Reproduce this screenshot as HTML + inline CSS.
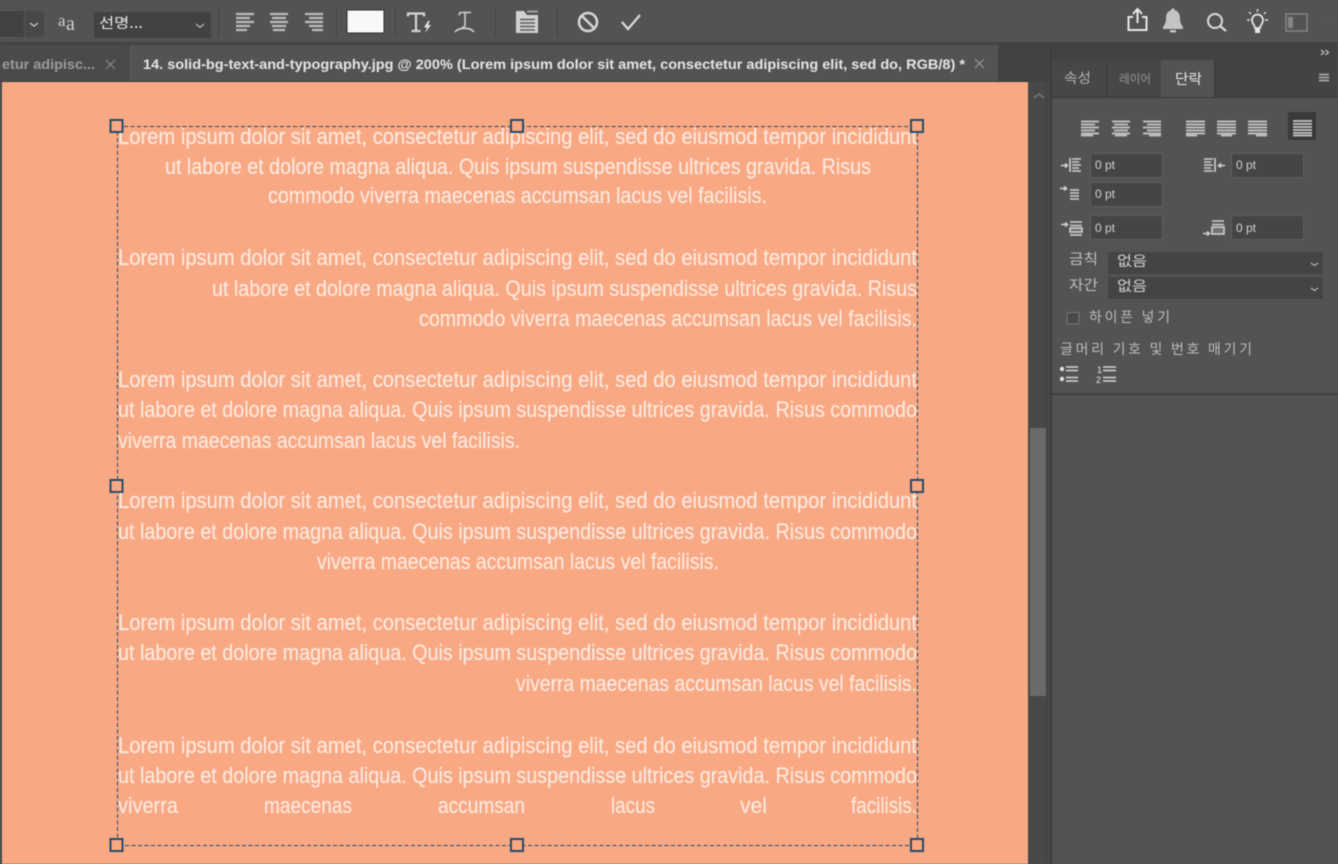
<!DOCTYPE html>
<html><head><meta charset="utf-8"><style>
html,body{margin:0;padding:0;background:#535353;width:1338px;height:864px;overflow:hidden}
svg{display:block;filter:blur(.4px)}
text{font-family:"Liberation Sans","Noto Sans CJK KR",sans-serif}
.b text{font-size:22px;fill:#fde9df;stroke:#fde9df;stroke-width:.15px}
.k{font-family:"WenQuanYi Zen Hei","Noto Sans CJK KR",sans-serif!important}
.pt{font-size:12px;fill:#d2d2d2}
</style></head><body>
<svg width="1338" height="864" viewBox="0 0 1338 864" xmlns="http://www.w3.org/2000/svg">
<rect width="1338" height="864" fill="#535353"/>
<!-- top bar -->
<rect x="0" y="42" width="1338" height="3" fill="#434343"/>
<!-- tab strip -->
<rect x="0" y="45" width="1050" height="37" fill="#424242"/>
<rect x="0" y="45" width="128" height="36" fill="#4a4a4a"/>
<rect x="129" y="45" width="869" height="36" fill="#535353"/>
<rect x="0" y="81" width="1028" height="1.5" fill="#3a3a3a"/>
<text x="2" y="69" font-size="14" font-weight="bold" fill="#9c9c9c" textLength="93" lengthAdjust="spacingAndGlyphs">etur adipisc...</text>
<path d="M106 60l9 9M115 60l-9 9" stroke="#8f8f8f" stroke-width="1.100"/>
<text x="143" y="69" font-size="14" font-weight="bold" fill="#e6e6e6" textLength="822" lengthAdjust="spacingAndGlyphs">14. solid-bg-text-and-typography.jpg @ 200% (Lorem ipsum dolor sit amet, consectetur adipiscing elit, sed do, RGB/8) *</text>
<path d="M975 59l9 9M984 59l-9 9" stroke="#9a9a9a" stroke-width="1.100"/>

<!-- canvas -->
<rect x="2" y="82" width="1026" height="782" fill="#f8a883"/>
<rect x="0" y="82" width="2" height="782" fill="#4a4a4a"/>

<!-- scrollbar -->
<rect x="1028" y="82" width="22" height="782" fill="#484848"/>
<rect x="1030" y="428" width="16" height="268" fill="#6a6a6a"/>
<path d="M1034 98l5-4 5 4" fill="none" stroke="#777" stroke-width="1.500"/>
<rect x="1046" y="82" width="1" height="782" fill="#404040"/>
<rect x="1050" y="45" width="2" height="819" fill="#3d3d3d"/>

<!-- body text -->
<g class="b" transform="translate(0,-1)">
<text x="118" y="145" textLength="799" lengthAdjust="spacingAndGlyphs">Lorem ipsum dolor sit amet, consectetur adipiscing elit, sed do eiusmod tempor incididunt</text>
<text x="165" y="175" textLength="706" lengthAdjust="spacingAndGlyphs">ut labore et dolore magna aliqua. Quis ipsum suspendisse ultrices gravida. Risus</text>
<text x="268" y="204" textLength="499" lengthAdjust="spacingAndGlyphs">commodo viverra maecenas accumsan lacus vel facilisis.</text>

<text x="118" y="266" textLength="799" lengthAdjust="spacingAndGlyphs">Lorem ipsum dolor sit amet, consectetur adipiscing elit, sed do eiusmod tempor incididunt</text>
<text x="212" y="297" textLength="705" lengthAdjust="spacingAndGlyphs">ut labore et dolore magna aliqua. Quis ipsum suspendisse ultrices gravida. Risus</text>
<text x="419" y="327" textLength="498" lengthAdjust="spacingAndGlyphs">commodo viverra maecenas accumsan lacus vel facilisis.</text>

<text x="118" y="388" textLength="799" lengthAdjust="spacingAndGlyphs">Lorem ipsum dolor sit amet, consectetur adipiscing elit, sed do eiusmod tempor incididunt</text>
<text x="118" y="418" textLength="799" lengthAdjust="spacingAndGlyphs">ut labore et dolore magna aliqua. Quis ipsum suspendisse ultrices gravida. Risus commodo</text>
<text x="118" y="449" textLength="402" lengthAdjust="spacingAndGlyphs">viverra maecenas accumsan lacus vel facilisis.</text>

<text x="118" y="509" textLength="799" lengthAdjust="spacingAndGlyphs">Lorem ipsum dolor sit amet, consectetur adipiscing elit, sed do eiusmod tempor incididunt</text>
<text x="118" y="540" textLength="799" lengthAdjust="spacingAndGlyphs">ut labore et dolore magna aliqua. Quis ipsum suspendisse ultrices gravida. Risus commodo</text>
<text x="317" y="570" textLength="402" lengthAdjust="spacingAndGlyphs">viverra maecenas accumsan lacus vel facilisis.</text>

<text x="118" y="631" textLength="799" lengthAdjust="spacingAndGlyphs">Lorem ipsum dolor sit amet, consectetur adipiscing elit, sed do eiusmod tempor incididunt</text>
<text x="118" y="661" textLength="799" lengthAdjust="spacingAndGlyphs">ut labore et dolore magna aliqua. Quis ipsum suspendisse ultrices gravida. Risus commodo</text>
<text x="516" y="692" textLength="401" lengthAdjust="spacingAndGlyphs">viverra maecenas accumsan lacus vel facilisis.</text>

<text x="118" y="754" textLength="799" lengthAdjust="spacingAndGlyphs">Lorem ipsum dolor sit amet, consectetur adipiscing elit, sed do eiusmod tempor incididunt</text>
<text x="118" y="784" textLength="799" lengthAdjust="spacingAndGlyphs">ut labore et dolore magna aliqua. Quis ipsum suspendisse ultrices gravida. Risus commodo</text>
<text x="118" y="814" textLength="60" lengthAdjust="spacingAndGlyphs">viverra</text>
<text x="264" y="814" textLength="88" lengthAdjust="spacingAndGlyphs">maecenas</text>
<text x="438" y="814" textLength="87" lengthAdjust="spacingAndGlyphs">accumsan</text>
<text x="611" y="814" textLength="44" lengthAdjust="spacingAndGlyphs">lacus</text>
<text x="740" y="814" textLength="27" lengthAdjust="spacingAndGlyphs">vel</text>
<text x="851" y="814" textLength="66" lengthAdjust="spacingAndGlyphs">facilisis.</text>
</g>

<!-- text box -->
<rect x="117.500" y="126.500" width="800" height="719" fill="none" stroke="#1f4a68" stroke-width="1" stroke-dasharray="4 2.500"/>
<g fill="#f8a883" stroke="#1f4e6e" stroke-width="2">
<rect x="110.500" y="120" width="12" height="12"/><rect x="511" y="120" width="12" height="12"/><rect x="911" y="120" width="12" height="12"/>
<rect x="110.500" y="480" width="12" height="12"/><rect x="911" y="480" width="12" height="12"/>
<rect x="110.500" y="839" width="12" height="12"/><rect x="511" y="839" width="12" height="12"/><rect x="911" y="839" width="12" height="12"/>
</g>

<!-- toolbar left -->
<rect x="0" y="11" width="24" height="26" fill="#424242"/>
<rect x="25" y="11" width="19" height="26" fill="#484848"/>
<path d="M30 23l4 3 4-3" fill="none" stroke="#c8c8c8" stroke-width="1.300"/>
<text x="58" y="26" font-size="17" fill="#d0d0d0" style="font-family:'Liberation Serif',serif">a</text>
<text x="66" y="30" font-size="20" fill="#d0d0d0" style="font-family:'Liberation Serif',serif">a</text>
<rect x="94" y="12" width="117" height="26" fill="#424242"/>
<text class="k" x="99" y="28" font-size="14" fill="#e8e8e8" textLength="44" lengthAdjust="spacingAndGlyphs">선명...</text>
<path d="M196 24l4 3.500 4-3.500" fill="none" stroke="#b8b8b8" stroke-width="1.200"/>
<rect x="218" y="7" width="1" height="30" fill="#444"/>
<!-- align -->
<g fill="none" stroke="#bdbdbd" stroke-width="2.200">
<path d="M236 14h18M236 18h14M236 22h18M236 26h14M236 30h11"/>
<path d="M270 14h18M272 18h14M270 22h18M272 26h14M273 30h12"/>
<path d="M305 14h18M309 18h14M305 22h18M309 26h14M312 30h11"/>
</g>
<rect x="336" y="7" width="1" height="30" fill="#444"/>
<rect x="347" y="10" width="37" height="23" rx="1" fill="#f8f8f8" stroke="#2e2e2e" stroke-width="1"/>
<rect x="395" y="7" width="1" height="30" fill="#444"/>
<!-- warp icons -->
<path d="M408 16.500v-3h16v3M416 13.500v17M411.500 31h9" fill="none" stroke="#d4d4d4" stroke-width="2.200"/>
<path d="M428 21l-4 6.500h3l-2 5.500 6-8h-3l2-4z" fill="#e0e0e0"/>
<path d="M459 15.500l1-3h11M465 12.500v12c0 2-1 3-3 3" fill="none" stroke="#cfcfcf" stroke-width="1.600"/>
<path d="M455 32c4-5 15-5 19 0" fill="none" stroke="#cfcfcf" stroke-width="1.700"/>
<rect x="495" y="7" width="1" height="30" fill="#444"/>
<!-- panels icon -->
<path d="M516 11h8l3 4h11v18h-22z" fill="#d2d2d2"/>
<path d="M527 11.500h11" stroke="#b4b4b4" stroke-width="1.500"/>
<path d="M520 19.500h15M520 23h15M520 26.500h15M520 30h15" stroke="#5b5b5b" stroke-width="1.500"/>
<rect x="557" y="7" width="1" height="30" fill="#444"/>
<circle cx="588" cy="22" r="9" fill="none" stroke="#d8d8d8" stroke-width="2.500"/>
<path d="M581.500 15.500l13 13" stroke="#d8d8d8" stroke-width="2.500"/>
<path d="M622 22l6 7 12-14" fill="none" stroke="#dcdcdc" stroke-width="2.200"/>

<!-- toolbar right -->
<path d="M1133 17h-4.500v13h18v-13h-4.500" fill="none" stroke="#e6e6e6" stroke-width="2"/>
<path d="M1137.500 23v-14M1133 14l4.500-5 4.500 5" fill="none" stroke="#e6e6e6" stroke-width="2"/>
<path d="M1173 10c5 0 7 4 7 8 0 5 1 6 3 9v2h-20v-2c2-3 3-4 3-9 0-4 2-8 7-8z" fill="#c4c4c4"/>
<rect x="1171.500" y="8.500" width="3" height="3" fill="#c4c4c4"/>
<rect x="1170" y="30" width="6" height="2.500" fill="#c4c4c4"/>
<circle cx="1215" cy="21" r="7" fill="none" stroke="#dcdcdc" stroke-width="2"/>
<path d="M1220 26l6 5" stroke="#dcdcdc" stroke-width="2.200"/>
<path d="M1255 28c0-3-3-4-3-8a5.500 5.500 0 0 1 11 0c0 4-3 5-3 8z" fill="none" stroke="#e4e4e4" stroke-width="1.800"/>
<rect x="1255" y="28" width="5" height="5" fill="#e4e4e4"/>
<path d="M1257.500 9v3M1249 12l2 2M1266 12l-2 2M1247 20h3M1265 20h3" stroke="#dcdcdc" stroke-width="1.400"/>
<rect x="1286" y="14" width="21" height="17" fill="none" stroke="#858585" stroke-width="1.500"/>
<rect x="1288" y="17" width="5" height="11" fill="#858585"/>
<path d="M1326 21l3 2 3-2" fill="none" stroke="#5e5e5e" stroke-width="1"/>

<!-- right panel -->
<rect x="1052" y="45" width="286" height="15" fill="#424242"/>
<rect x="1052" y="60" width="286" height="37" fill="#434343"/>
<rect x="1052" y="60" width="54" height="37" fill="#474747"/>
<rect x="1106" y="60" width="55" height="37" fill="#474747"/>
<rect x="1106" y="60" width="1" height="37" fill="#3c3c3c"/>
<rect x="1161" y="60" width="53" height="38" fill="#535353"/>
<rect x="1214" y="60" width="1" height="38" fill="#3a3a3a"/>
<path d="M1321 50l3 2.500-3 2.500M1325.500 50l3 2.500-3 2.500" fill="none" stroke="#c4c4c4" stroke-width="1.200"/>
<text class="k" x="1064" y="83" font-size="14" fill="#b4b4b4" textLength="27" lengthAdjust="spacingAndGlyphs">속성</text>
<text class="k" x="1119" y="83" font-size="12" fill="#959595" textLength="32" lengthAdjust="spacingAndGlyphs">레이어</text>
<text class="k" x="1175" y="84" font-size="14" fill="#e8e8e8" textLength="27" lengthAdjust="spacingAndGlyphs">단락</text>
<path d="M1319 74.500h10M1319 77.500h10M1319 80.500h10" stroke="#a8a8a8" stroke-width="1.700"/>
<rect x="1052" y="97" width="286" height="1" fill="#3a3a3a"/>

<!-- paragraph align -->
<g fill="none" stroke="#bdbdbd" stroke-width="2">
<path d="M1081 121.500h18M1081 124.500h14M1081 127.500h18M1081 130.500h14M1081 133.500h18M1081 135.500h12"/>
<path d="M1112 121.500h18M1114 124.500h14M1112 127.500h18M1114 130.500h14M1112 133.500h18M1115 135.500h12"/>
<path d="M1143 121.500h18M1147 124.500h14M1143 127.500h18M1147 130.500h14M1143 133.500h18M1149 135.500h12"/>
<path d="M1186 121.500h19M1186 124.500h19M1186 127.500h19M1186 130.500h19M1186 133.500h19M1186 135.500h11"/>
<path d="M1217 121.500h19M1217 124.500h19M1217 127.500h19M1217 130.500h19M1217 133.500h19M1221 135.500h11"/>
<path d="M1248 121.500h19M1248 124.500h19M1248 127.500h19M1248 130.500h19M1248 133.500h19M1256 135.500h11"/>
</g>
<rect x="1288" y="112" width="28" height="28" fill="#3a3a3a"/>
<path d="M1293 121h19M1293 124h19M1293 127h19M1293 130h19M1293 133h19M1293 135.500h19" stroke="#c8c8c8" stroke-width="1.800"/>

<!-- fields -->
<g fill="#454545" stroke="#5e5e5e" stroke-width="1">
<rect x="1090.500" y="153.500" width="72" height="24"/>
<rect x="1231.500" y="153.500" width="72" height="24"/>
<rect x="1090.500" y="182.500" width="72" height="24"/>
<rect x="1090.500" y="215.500" width="72" height="24"/>
<rect x="1231.500" y="215.500" width="72" height="24"/>
</g>
<g class="pt">
<text class="pt" x="1095" y="169">0 pt</text>
<text class="pt" x="1236" y="169">0 pt</text>
<text class="pt" x="1095" y="198">0 pt</text>
<text class="pt" x="1095" y="232">0 pt</text>
<text class="pt" x="1236" y="232">0 pt</text>
</g>
<!-- indent icons -->
<g stroke="#d0d0d0" fill="none" stroke-width="1.600">
<path d="M1061 165.500h6M1065 163.500l2.500 2-2.500 2"/>
<path d="M1070 158v14"/>
<path d="M1072 159h9M1072 162h7M1072 165h9M1072 168h7M1072 171h9"/>
<path d="M1204 159h9M1204 162h7M1204 165h9M1204 168h7M1204 171h9"/>
<path d="M1215 158v14"/>
<path d="M1225 165.500h-6M1221 163.500l-2.500 2 2.500 2"/>
<path d="M1060 188.500h6M1064 186.500l2.500 2-2.500 2"/>
<path d="M1070 190h9M1070 193h9M1070 196h9M1070 199h9"/>
<path d="M1061 224.500h6M1065 222.500l2.500 2-2.500 2"/>
<path d="M1070 222h12M1070 225.500h12"/>
<rect x="1070" y="228" width="12" height="4" fill="#707070"/>
<path d="M1070 235h12"/>
<path d="M1203 233.500h6M1207 231.500l2.500 2-2.500 2"/>
<path d="M1212 221h12M1212 224.500h12"/>
<rect x="1212" y="227" width="12" height="7" fill="#707070"/>
</g>

<!-- dropdowns -->
<text class="k" x="1069" y="264" font-size="14" fill="#c0c0c0" textLength="29" lengthAdjust="spacingAndGlyphs">금칙</text>
<rect x="1108" y="252" width="215" height="22" fill="#444444"/>
<text class="k" x="1117" y="266" font-size="14" fill="#d0d0d0" textLength="30" lengthAdjust="spacingAndGlyphs">없음</text>
<path d="M1311 263l3.500 2.500 3.500-2.500" fill="none" stroke="#b4b4b4" stroke-width="1.200"/>
<text class="k" x="1069" y="290" font-size="14" fill="#c0c0c0" textLength="29" lengthAdjust="spacingAndGlyphs">자간</text>
<rect x="1108" y="277" width="215" height="22" fill="#444444"/>
<text class="k" x="1117" y="291" font-size="14" fill="#d0d0d0" textLength="30" lengthAdjust="spacingAndGlyphs">없음</text>
<path d="M1311 288l3.500 2.500 3.500-2.500" fill="none" stroke="#b4b4b4" stroke-width="1.200"/>

<rect x="1067" y="312.500" width="12" height="11.500" rx="1.500" fill="#494949" stroke="#7a7a7a" stroke-width="1"/>
<text class="k" x="1089" y="322" font-size="14" fill="#bcbcbc" textLength="81">하이픈 넣기</text>
<text class="k" x="1060" y="354" font-size="14" fill="#bcbcbc" textLength="192">글머리 기호 및 번호 매기기</text>
<circle cx="1062" cy="369" r="2.200" fill="#e0e0e0"/><circle cx="1062" cy="379" r="2.200" fill="#e0e0e0"/>
<path d="M1066 367h12M1066 370.500h12M1066 377.500h12M1066 381h12" stroke="#d8d8d8" stroke-width="1.500"/>
<text x="1097" y="373" font-size="9" fill="#e0e0e0">1</text><text x="1096" y="383" font-size="9" fill="#e0e0e0">2</text>
<path d="M1103 367h13M1103 370.500h13M1103 377.500h13M1103 381h13" stroke="#d8d8d8" stroke-width="1.500"/>
<rect x="1052" y="393" width="286" height="2" fill="#414141"/>
</svg>
</body></html>
